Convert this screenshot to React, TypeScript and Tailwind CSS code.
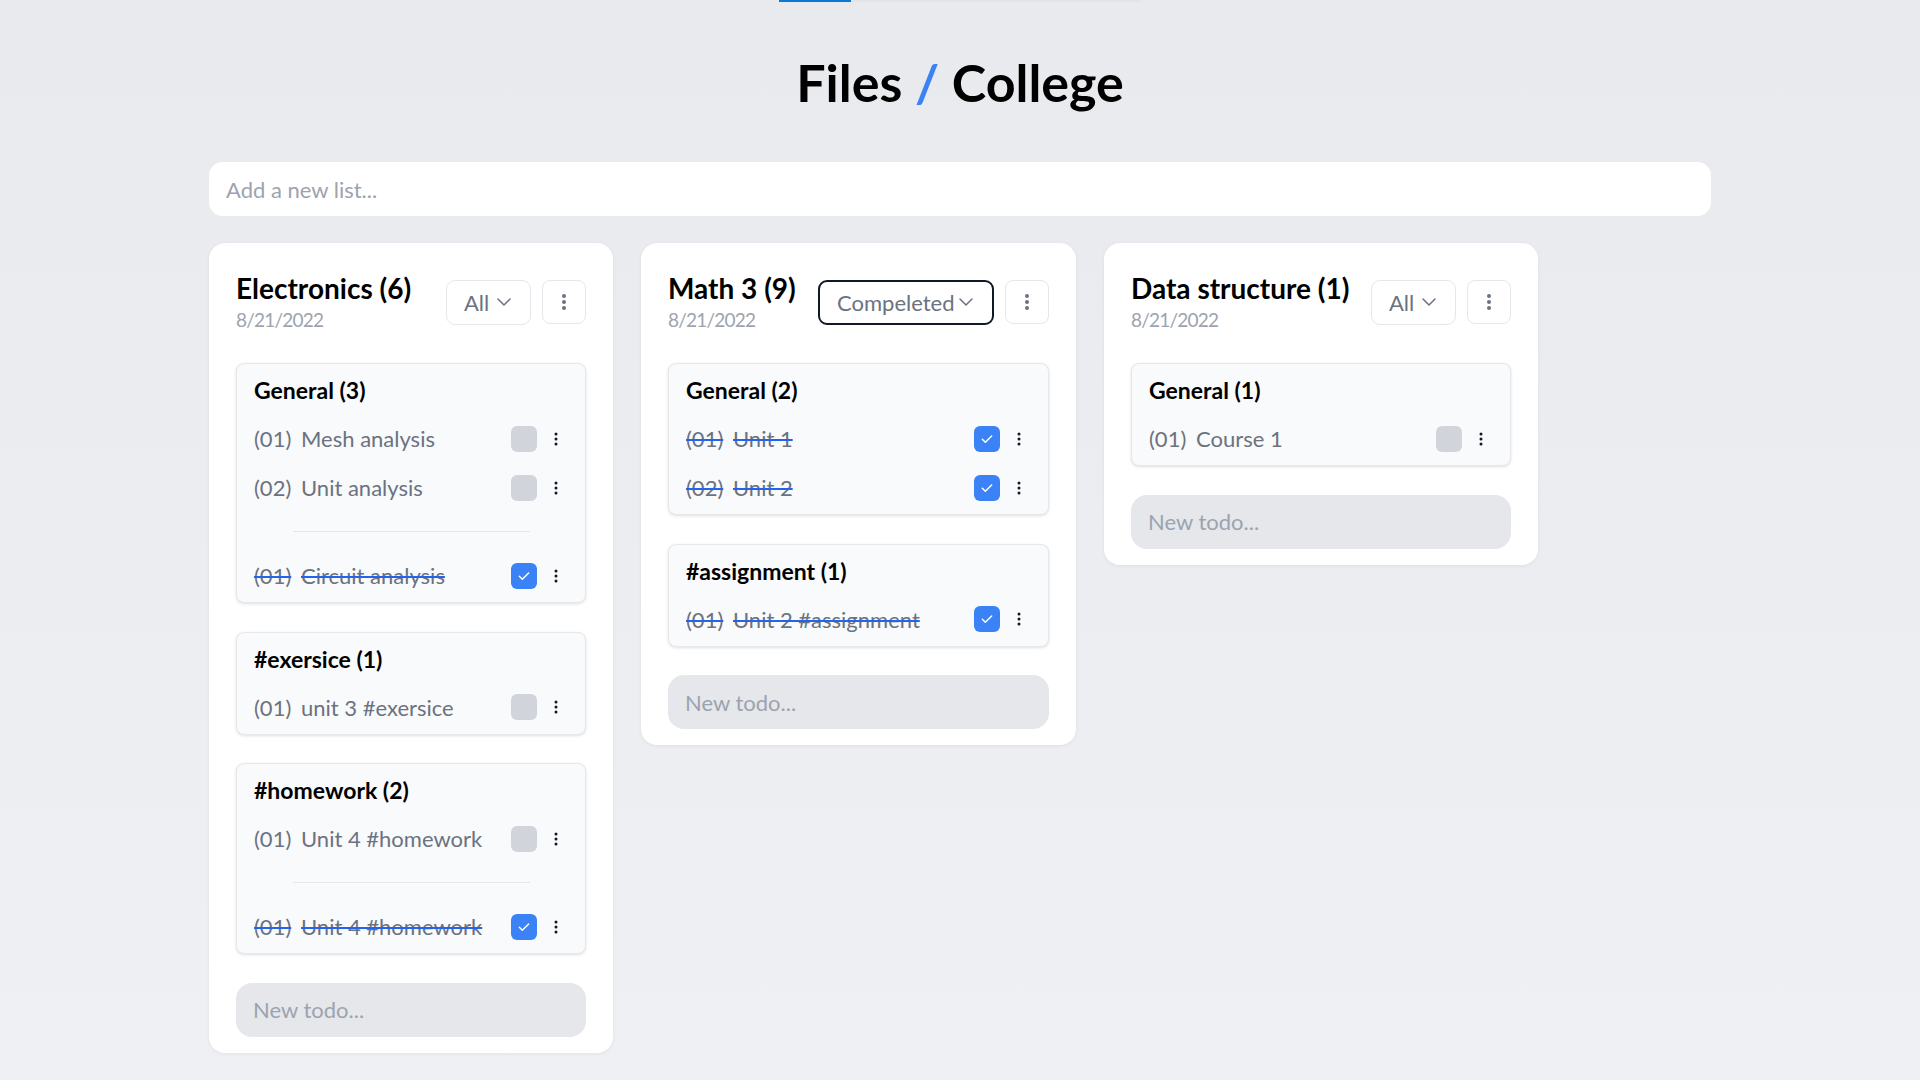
import React from "react";

type Todo = { n: string; text: string };
type Group = { title: string; active: Todo[]; done: Todo[] };
type List = {
  title: string;
  date: string;
  filter: string;
  width: string;
  selectWidth: string;
  groups: Group[];
};

const LISTS: List[] = [
  {
    title: "Electronics (6)",
    date: "8/21/2022",
    filter: "All",
    width: "w-[404px]",
    selectWidth: "w-[85px]",
    groups: [
      {
        title: "General (3)",
        active: [
          { n: "(01)", text: "Mesh analysis" },
          { n: "(02)", text: "Unit analysis" },
        ],
        done: [{ n: "(01)", text: "Circuit analysis" }],
      },
      {
        title: "#exersice (1)",
        active: [{ n: "(01)", text: "unit 3 #exersice" }],
        done: [],
      },
      {
        title: "#homework (2)",
        active: [{ n: "(01)", text: "Unit 4 #homework" }],
        done: [{ n: "(01)", text: "Unit 4 #homework" }],
      },
    ],
  },
  {
    title: "Math 3 (9)",
    date: "8/21/2022",
    filter: "Compeleted",
    width: "w-[435px]",
    selectWidth: "w-[176px]",
    groups: [
      {
        title: "General (2)",
        active: [],
        done: [
          { n: "(01)", text: "Unit 1" },
          { n: "(02)", text: "Unit 2" },
        ],
      },
      {
        title: "#assignment (1)",
        active: [],
        done: [{ n: "(01)", text: "Unit 2 #assignment" }],
      },
    ],
  },
  {
    title: "Data structure (1)",
    date: "8/21/2022",
    filter: "All",
    width: "w-[434px]",
    selectWidth: "w-[85px]",
    groups: [
      {
        title: "General (1)",
        active: [{ n: "(01)", text: "Course 1" }],
        done: [],
      },
    ],
  },
];

const Chevron = () => (
  <svg width="14" height="8" viewBox="0 0 14 8" fill="none" className="shrink-0">
    <path d="M1 1l6 6 6-6" stroke="#6b7280" strokeWidth="1.5" strokeLinecap="round" strokeLinejoin="round" />
  </svg>
);

const Dots = ({ big }: { big?: boolean }) =>
  big ? (
    <svg width="6" height="18" viewBox="0 0 6 18">
      <circle cx="3" cy="3" r="2" fill="#6b7280" />
      <circle cx="3" cy="9" r="2" fill="#6b7280" />
      <circle cx="3" cy="15" r="2" fill="#6b7280" />
    </svg>
  ) : (
    <svg width="4" height="14" viewBox="0 0 4 14">
      <circle cx="2" cy="2" r="1.5" fill="#111827" />
      <circle cx="2" cy="7" r="1.5" fill="#111827" />
      <circle cx="2" cy="12" r="1.5" fill="#111827" />
    </svg>
  );

const Row = ({ todo, done }: { todo: Todo; done?: boolean }) => {
  const strike = done ? "line-through decoration-[#2563eb] decoration-2" : "";
  return (
    <div className="h-[49px] flex items-center pl-[17px] pr-[19px] text-[22px] text-[#6b7280]">
      <span className={`w-[35px] mr-[12px] whitespace-nowrap ${strike}`}>{todo.n}</span>
      <span className={`flex-1 whitespace-nowrap ${strike}`}>{todo.text}</span>
      {done ? (
        <span className="w-[26px] h-[26px] rounded-[6px] bg-[#3b82f6] flex items-center justify-center">
          <svg width="16" height="16" viewBox="0 0 24 24" fill="none">
            <path d="M5 12.5l4.5 4.5L19 7.5" stroke="white" strokeWidth="2.2" strokeLinecap="round" strokeLinejoin="round" />
          </svg>
        </span>
      ) : (
        <span className="w-[26px] h-[26px] rounded-[6px] bg-[#d1d5db]" />
      )}
      <span className="ml-[9px] w-[20px] flex justify-center">
        <Dots />
      </span>
    </div>
  );
};

const GroupCard = ({ group }: { group: Group }) => (
  <div className="rounded-[8px] border border-[#e5e7eb] bg-[#f9fafb] shadow-[0_1px_3px_rgba(0,0,0,0.12)] pt-[10px] pb-[2px]">
    <div className="h-[32px] leading-[32px] pl-[17px] text-[23px] font-bold text-black">{group.title}</div>
    <div className="mt-[8px]">
      {group.active.map((t, i) => (
        <Row key={"a" + i} todo={t} />
      ))}
      {group.active.length > 0 && group.done.length > 0 && (
        <div className="w-[237px] h-px bg-[#e5e7eb] mx-auto mt-[18.5px] mb-[19.5px]" />
      )}
      {group.done.map((t, i) => (
        <Row key={"d" + i} todo={t} done />
      ))}
    </div>
  </div>
);

const ListCard = ({ list }: { list: List }) => {
  const active = list.filter !== "All";
  return (
    <div className={`${list.width} shrink-0 bg-white rounded-[16px] shadow-[0_1px_4px_rgba(0,0,0,0.06)] px-[27px] pt-[27px] pb-[16px]`}>
      <div className="flex items-center">
        <div className="flex-1 min-w-0">
          <div className="h-[36px] leading-[36px] text-[28px] font-bold text-black whitespace-nowrap">{list.title}</div>
          <div className="h-[28px] leading-[28px] text-[19px] tracking-[-0.8px] text-[#9ca3af]">{list.date}</div>
        </div>
        <div
          className={`${list.selectWidth} h-[45px] flex items-center justify-between pl-[17px] pr-[19px] rounded-[9px] text-[22px] text-[#6b7280] ${
            active ? "border-2 border-[#111827]" : "border border-[#e5e7eb]"
          }`}
        >
          <span>{list.filter}</span>
          <Chevron />
        </div>
        <div className="ml-[11px] w-[44px] h-[44px] rounded-[8px] border border-[#e5e7eb] flex items-center justify-center">
          <Dots big />
        </div>
      </div>
      <div className="mt-[29px] flex flex-col gap-[28.5px]">
        {list.groups.map((g, i) => (
          <GroupCard key={i} group={g} />
        ))}
        <div className="h-[54px] rounded-[16px] bg-[#e5e7eb] flex items-center pl-[17px] text-[22px] text-[#9ca3af]">
          New todo...
        </div>
      </div>
    </div>
  );
};

export default function App() {
  return (
    <div className="min-h-screen bg-gradient-to-b from-[#e9eaee] to-[#eff0f3] font-['Lato',sans-serif] flex flex-col items-center">
      {/* loading bar */}
      <div className="w-[362px] h-[2px] flex">
        <div className="w-[72px] bg-[#0b78d6]" />
        <div className="flex-1 bg-[#e3e4e6]" />
      </div>

      <h1 className="mt-[54px] h-[53px] leading-[53px] text-[52px] font-bold text-black whitespace-nowrap">
        Files <span className="text-[#3b82f6]">/</span> College
      </h1>

      <div className="w-[1502px] mt-[53px]">
        <div className="h-[54px] rounded-[14px] bg-white flex items-center pl-[17px] text-[22px] text-[#9ca3af]">
          Add a new list...
        </div>

        <div className="mt-[27px] flex items-start gap-[28px]">
          {LISTS.map((l, i) => (
            <ListCard key={i} list={l} />
          ))}
        </div>
      </div>
    </div>
  );
}
